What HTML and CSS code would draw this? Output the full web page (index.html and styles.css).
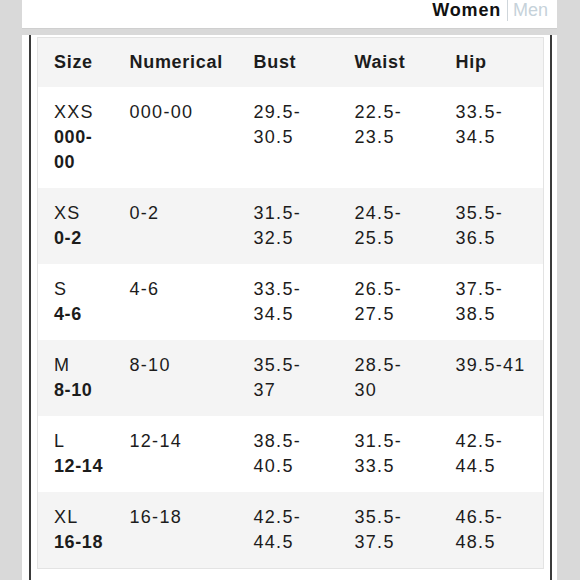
FILE: index.html
```html
<!DOCTYPE html>
<html lang="en">
<head>
<meta charset="utf-8">
<title>Size chart</title>
<link rel="stylesheet" href="styles.css">
</head>
<body>
<div class="page">
  <div class="topbar">
    <span class="tab tab-active">Women</span>
    <span class="sep"></span>
    <span class="tab tab-off">Men</span>
  </div>
  <div class="panel">
    <div class="frame">
      <table class="chart">
        <colgroup>
          <col class="c-size"><col class="c-num"><col class="c-bust"><col class="c-waist"><col class="c-hip">
        </colgroup>
        <thead>
          <tr><th>Size</th><th>Numerical</th><th>Bust</th><th>Waist</th><th>Hip</th></tr>
        </thead>
        <tbody>
          <tr><td>XXS<br><b>000-00</b></td><td>000-00</td><td class="m">29.5-30.5</td><td class="m">22.5-23.5</td><td>33.5-34.5</td></tr>
          <tr><td>XS<br><b>0-2</b></td><td>0-2</td><td class="m">31.5-32.5</td><td class="m">24.5-25.5</td><td>35.5-36.5</td></tr>
          <tr><td>S<br><b>4-6</b></td><td>4-6</td><td class="m">33.5-34.5</td><td class="m">26.5-27.5</td><td>37.5-38.5</td></tr>
          <tr><td>M<br><b>8-10</b></td><td>8-10</td><td class="m">35.5-37</td><td class="m">28.5-30</td><td>39.5-41</td></tr>
          <tr><td>L<br><b>12-14</b></td><td>12-14</td><td class="m">38.5-40.5</td><td class="m">31.5-33.5</td><td>42.5-44.5</td></tr>
          <tr><td>XL<br><b>16-18</b></td><td>16-18</td><td class="m">42.5-44.5</td><td class="m">35.5-37.5</td><td>46.5-48.5</td></tr>
        </tbody>
      </table>
    </div>
  </div>
</div>
</body>
</html>
```

FILE: styles.css
```css
html, body {
  margin: 0;
  padding: 0;
  background: #d9d9d9;
  height: 580px;
  overflow: hidden;
}

.page {
  width: 535px;
  margin-left: 22px;
  font-family: "Liberation Sans", Arial, sans-serif;
  color: #1c1c1c;
}

.topbar {
  height: 24px;
  padding: 0 9px 4px 0;
  background: #fff;
  border-bottom: 1px solid #cfcfcf;
  display: flex;
  justify-content: flex-end;
  align-items: flex-start;
  box-sizing: content-box;
}

.tab {
  font-size: 18px;
  line-height: 21px;
  letter-spacing: 0.8px;
}

.tab-active {
  font-weight: bold;
  color: #111;
}

.sep {
  width: 1px;
  height: 21px;
  background: #cfd6db;
  margin: 0 5px 0 6px;
}

.tab-off {
  font-weight: normal;
  color: #c6d2da;
  letter-spacing: 0;
}

.panel {
  margin-top: 6px;
  background: #fff;
  padding: 0 5px 0 7px;
  height: 560px;
}

.frame {
  border-left: 2px solid #3a3a3a;
  border-right: 2px solid #3a3a3a;
  padding: 2px 6px 0 6px;
  height: 560px;
  box-sizing: border-box;
}

.chart {
  border-collapse: collapse;
  table-layout: fixed;
  width: 506px;
  border: 1px solid #e3e3e3;
  font-size: 18px;
  line-height: 25px;
}

.c-size { width: 76px; }
.c-num { width: 124px; }
.c-bust { width: 101px; }
.c-waist { width: 101px; }
.c-hip { width: 104px; }

.chart th {
  text-align: left;
  font-weight: bold;
  letter-spacing: 0.7px;
  padding: 12px 8px 12px 16px;
  background: #f4f4f4;
  vertical-align: top;
}

.chart td {
  padding: 13px 8px 13px 16px;
  vertical-align: top;
  letter-spacing: 1.3px;
}

.chart td:first-child {
  padding-right: 2px;
}

.chart td.m {
  padding-right: 24px;
}

.chart tbody tr:nth-child(odd) td {
  background: #ffffff;
}

.chart tbody tr:nth-child(even) td {
  background: #f4f4f4;
}

.chart b {
  font-weight: bold;
  letter-spacing: 0.6px;
}
```
